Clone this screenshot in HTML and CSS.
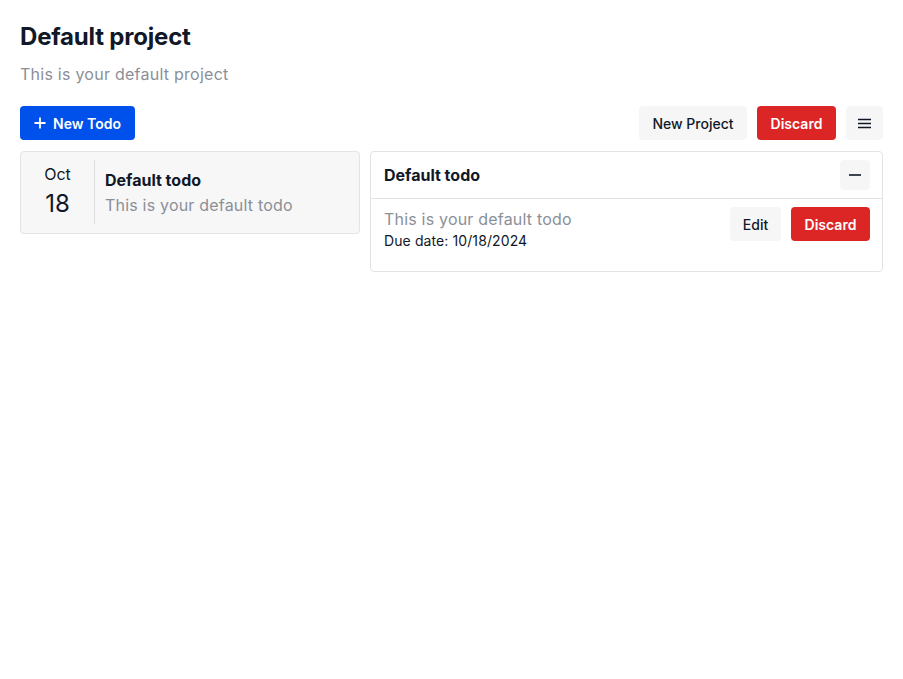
FILE: index.html
```html
<!DOCTYPE html>
<html lang="en">
<head>
<meta charset="utf-8">
<title>Default project</title>
<link rel="stylesheet" href="styles.css">
</head>
<body>
<main class="page">
  <header class="project-head">
    <h1 class="project-title">Default project</h1>
    <p class="project-desc">This is your default project</p>
  </header>
  <div class="toolbar">
    <button class="btn btn-primary"><svg class="plus" width="12" height="12" viewBox="0 0 12 12"><path d="M6 0.5v11M0.5 6h11" stroke="#fff" stroke-width="1.8" fill="none"/></svg>New Todo</button>
    <div class="toolbar-right">
      <button class="btn btn-light">New Project</button>
      <button class="btn btn-danger">Discard</button>
      <button class="btn btn-light btn-icon"><svg width="13" height="11" viewBox="0 0 13 11"><path d="M0 1.5h13M0 5.5h13M0 9.5h13" stroke="#111827" stroke-width="1.5" fill="none"/></svg></button>
    </div>
  </div>
  <div class="content">
    <div class="todo-list">
      <div class="todo-item">
        <div class="todo-date">
          <span class="month">Oct</span>
          <span class="day">18</span>
        </div>
        <div class="todo-info">
          <div class="todo-name">Default todo</div>
          <div class="todo-sub">This is your default todo</div>
        </div>
      </div>
    </div>
    <section class="detail">
      <div class="detail-head">
        <h2 class="detail-title">Default todo</h2>
        <button class="btn-collapse"><svg width="12" height="2" viewBox="0 0 12 2"><path d="M0 1h12" stroke="#111827" stroke-width="1.6"/></svg></button>
      </div>
      <div class="detail-body">
        <div class="detail-text">
          <div class="detail-desc">This is your default todo</div>
          <div class="detail-due">Due date: 10/18/2024</div>
        </div>
        <div class="detail-actions">
          <button class="btn btn-light">Edit</button>
          <button class="btn btn-danger">Discard</button>
        </div>
      </div>
    </section>
  </div>
</main>
</body>
</html>
```

FILE: styles.css
```css
* { box-sizing: border-box; }
html, body { margin: 0; padding: 0; background: #fff; }
body {
  font-family: "Inter", "Noto Sans", sans-serif;
  color: #111827;
}
.page { padding: 20px; }
.project-head { margin: 0; }
.project-title {
  margin: 0;
  font-size: 24px;
  line-height: 34px;
  font-weight: 700;
  letter-spacing: -0.2px;
}
.project-desc {
  margin: 8px 0 0;
  font-size: 16px;
  line-height: 24px;
  color: #8b8f97;
  letter-spacing: 0.25px;
}
.toolbar {
  margin-top: 20px;
  display: flex;
  justify-content: space-between;
  align-items: center;
}
.toolbar-right { display: flex; gap: 10px; }
.btn {
  height: 34px;
  border: none;
  border-radius: 4px;
  padding: 0 12px;
  font-family: inherit;
  font-size: 14px;
  display: inline-flex;
  align-items: center;
  justify-content: center;
  gap: 7px;
  cursor: pointer;
}
.btn-primary { background: #0050ec; color: #fff; font-weight: 600; width: 115px; }
.btn-light { background: #f6f6f6; color: #111827; font-weight: 500; }
.btn-danger { background: #dc2626; color: #fff; font-weight: 600; }
.toolbar-right .btn-light:first-child { width: 108px; }
.toolbar-right .btn-danger { width: 79px; }
.btn-icon { width: 37px; padding: 0; }
.content {
  margin-top: 11px;
  display: grid;
  grid-template-columns: 340px 1fr;
  gap: 10px;
  align-items: start;
}
.todo-item {
  display: flex;
  background: #f7f7f7;
  border: 1px solid #e3e3e3;
  border-radius: 4px;
  padding: 8px 0 9px;
}
.todo-date {
  width: 74px;
  border-right: 1px solid #dedede;
  display: flex;
  flex-direction: column;
  align-items: center;
  justify-content: center;
  height: 64px;
}
.month { font-size: 16px; line-height: 24px; }
.day { font-size: 24px; line-height: 36px; }
.todo-info {
  padding: 8px 10px 0;
}
.todo-name { font-size: 16px; font-weight: 700; line-height: 24px; }
.todo-sub { font-size: 16px; color: #8b8f97; line-height: 24px; margin-top: 1px; letter-spacing: 0.2px; }
.detail {
  border: 1px solid #e3e3e3;
  border-radius: 4px;
  background: #fff;
}
.detail-head {
  height: 47px;
  border-bottom: 1px solid #e3e3e3;
  display: flex;
  justify-content: space-between;
  align-items: center;
  padding: 0 12px 0 13px;
}
.detail-title { margin: 0; font-size: 16px; font-weight: 700; }
.btn-collapse {
  width: 30px; height: 30px;
  border: none;
  border-radius: 4px;
  background: #f6f6f6;
  display: flex; align-items: center; justify-content: center;
  padding: 0;
  margin-bottom: 1px;
}
.detail-body {
  display: flex;
  justify-content: space-between;
  padding: 8px 12px 20px 13px;
}
.detail-desc { font-size: 16px; line-height: 24px; color: #8b8f97; letter-spacing: 0.2px; }
.detail-due { font-size: 14px; line-height: 20px; letter-spacing: 0.1px; }
.detail-actions { display: flex; gap: 10px; }
.detail-actions .btn-light { width: 51px; }
.detail-actions .btn-danger { width: 79px; }
```
